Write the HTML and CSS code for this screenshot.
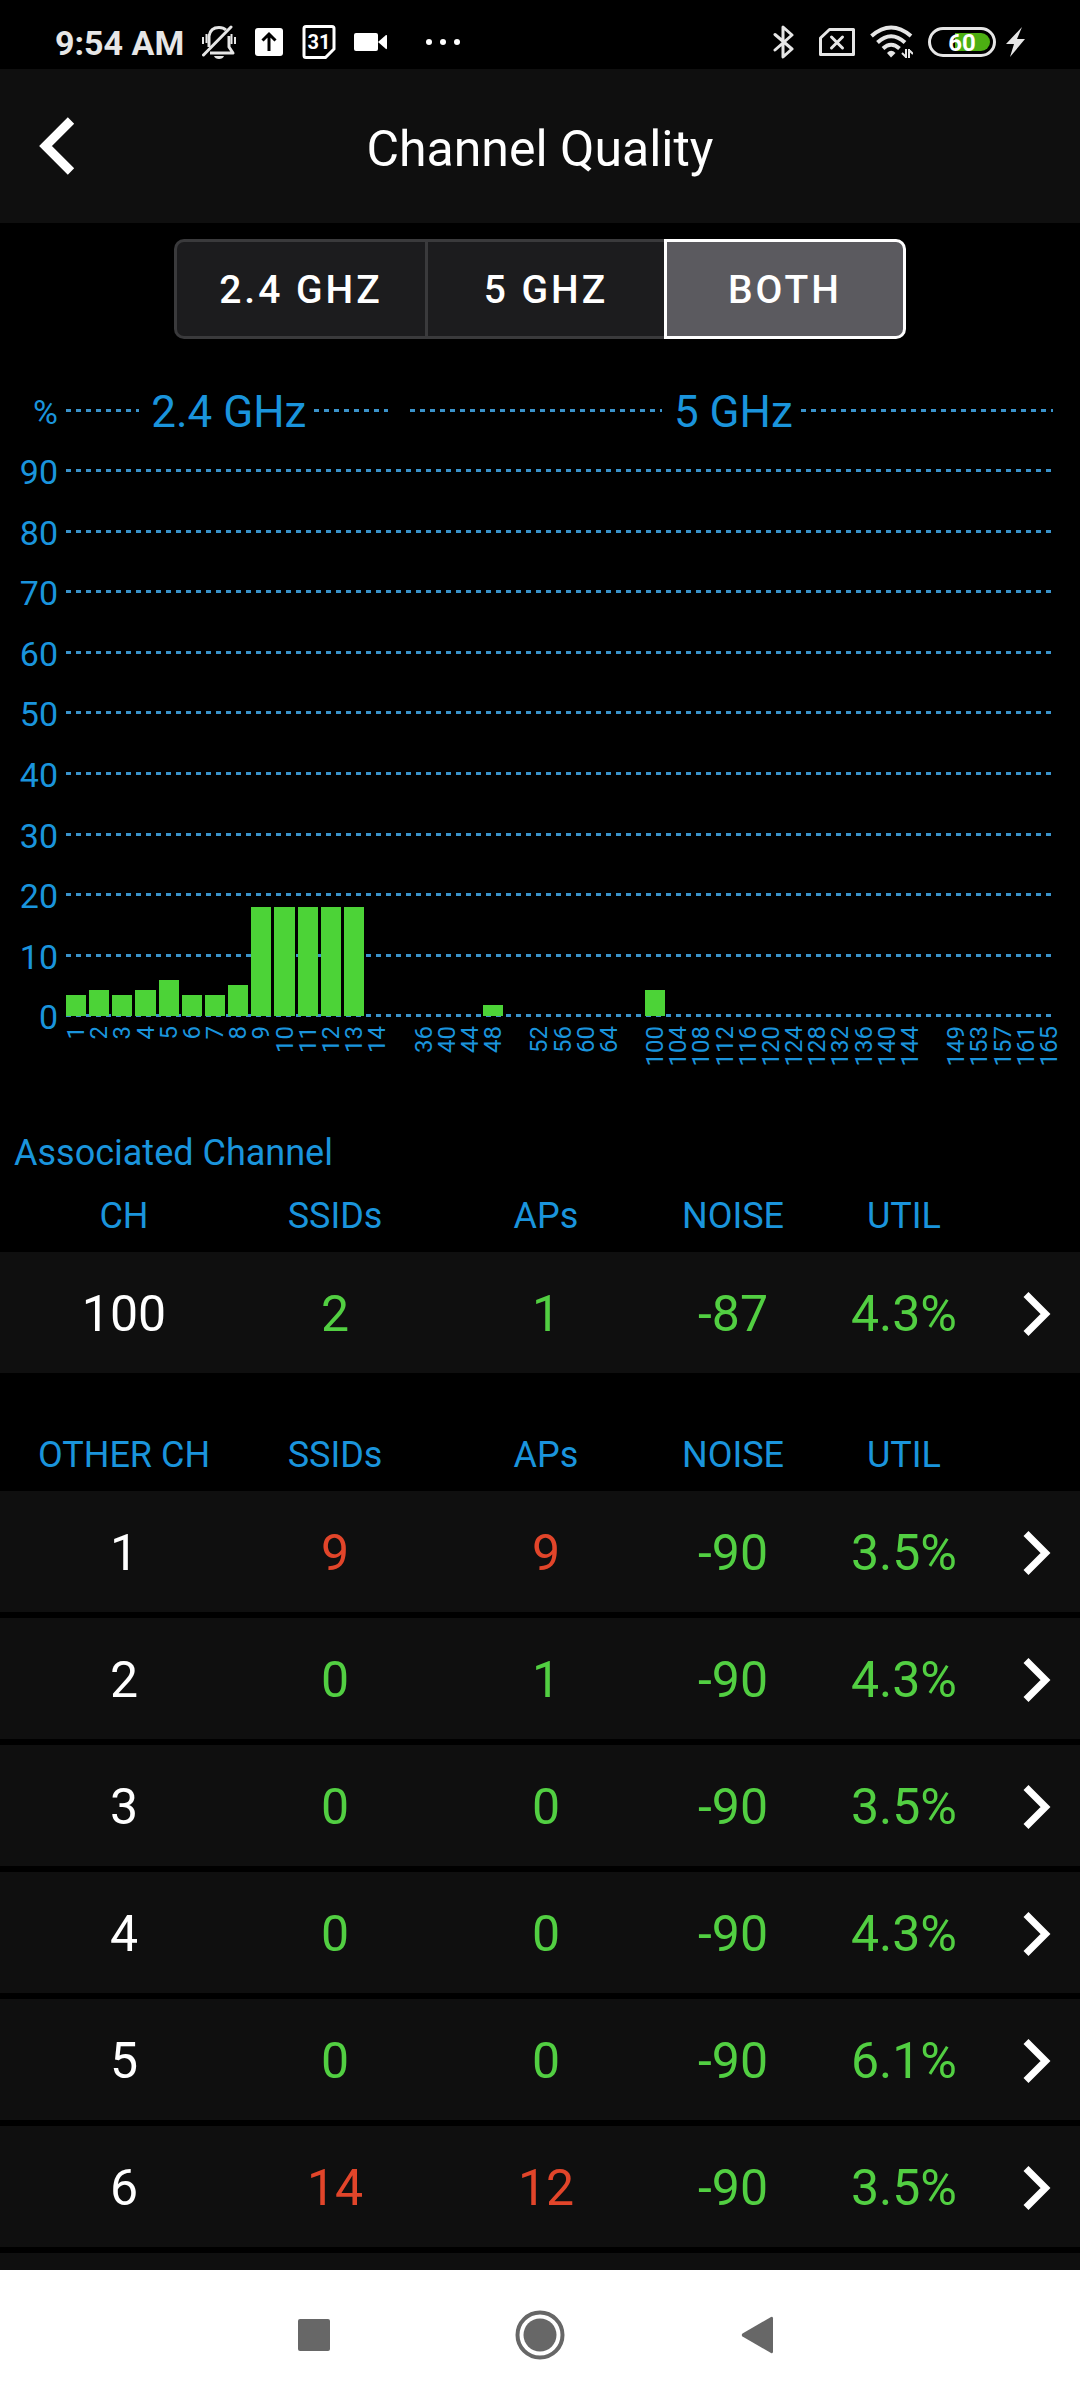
FILE: index.html
```html
<!DOCTYPE html>
<html lang="en">
<head>
<meta charset="utf-8">
<meta name="viewport" content="width=device-width, initial-scale=1">
<title>Channel Quality</title>
<link rel="stylesheet" href="styles.css">
</head>
<body>
<div class="app">
  <div class="status">
    <div class="status-side">
      <span class="time">9:54 AM</span>
      <svg width="34" height="34" viewBox="0 0 34 34" fill="none" stroke="#e6e6e6" stroke-width="3">
        <path d="M7 22V11C8 5 12 2.500 17 2.500C20 2.500 22.500 3.500 24 5M27 11V22L31 28H8" stroke-linejoin="round"/>
        <path d="M1.500 30L29 2" stroke-linecap="round"/>
        <path d="M1 12v7M4.500 9v9M33 12v7M29.500 9v10" stroke-width="2"/>
        <path d="M12 31h10c-1 4-9 4-10 0z" fill="#e6e6e6" stroke="none"/>
      </svg>
      <svg width="30" height="28" viewBox="0 0 30 28"><rect x="1" width="28" height="28" rx="3" fill="#fff"/><path d="M15 23V6M8.500 12.500L15 6l6.500 6.500" fill="none" stroke="#000" stroke-width="3"/></svg>
      <svg width="34" height="34" viewBox="0 0 34 34"><path d="M4 1.500H30Q32 1.500 32 3.500V24L23.500 32.500H4Q2 32.500 2 30.500V3.500Q2 1.500 4 1.500Z" fill="none" stroke="#fff" stroke-width="3"/><text x="17" y="23.500" class="cal-day">31</text></svg>
      <svg width="33" height="20" viewBox="0 0 33 20" fill="#fff"><rect y="1" width="24" height="18" rx="2"/><path d="M24 10L32 3Q33 2.500 33 4V16Q33 17.500 32 17z"/></svg>
      <svg class="more" width="36" height="8" viewBox="0 0 36 8" fill="#fff"><circle cx="4" cy="4" r="3"/><circle cx="18" cy="4" r="3"/><circle cx="32" cy="4" r="3"/></svg>
    </div>
    <div class="status-side status-right">
      <svg width="32" height="34" viewBox="0 0 32 34" fill="none" stroke="#e6e6e6" stroke-width="3" stroke-linejoin="round" stroke-linecap="round"><path d="M3 9.500L20 24L11 32V2L20 10L3 25"/></svg>
      <svg width="36" height="28" viewBox="0 0 36 28" fill="none" stroke="#e6e6e6" stroke-width="3"><path d="M10.500 1.500H34.500V26.500H1.500V10Z" stroke-linejoin="round"/><path d="M12.500 9L23.500 20M23.500 9L12.500 20" stroke-linecap="round"/></svg>
      <svg width="43" height="34" viewBox="0 0 43 34" fill="none" stroke="#e6e6e6" stroke-width="4"><path d="M1.500 11Q21 -6 41 11M7.500 17.500Q21 5 35 17.500M13 23.500Q21 16 29.500 23.500"/><path d="M17 28Q21 23.500 25.500 28L21 32.500Z" fill="#e6e6e6" stroke="none"/><path d="M36 24v9M39 33v-9M36 32l-4-4M39 25l4 4" stroke-width="2"/></svg>
      <span class="power">
        <svg width="68" height="30" viewBox="0 0 68 30"><rect x="1.500" y="1.500" width="65" height="27" rx="13.500" fill="none" stroke="#e6e6e6" stroke-width="3"/><path d="M27 6H53A9 9 0 0 1 53 24H27Z" fill="#4caf12"/><text x="34" y="23.500" class="charge">60</text></svg>
        <svg width="19" height="30" viewBox="0 0 19 30"><path d="M16 0L0 17H8L4 30L19 12H11Z" fill="#e6e6e6"/></svg>
      </span>
    </div>
  </div>

  <header class="header">
    <button class="back" aria-label="Back"><svg width="36" height="58" viewBox="0 0 36 58"><path d="M32 3.500L6.500 29L32 54.500" fill="none" stroke="#fff" stroke-width="9"/></svg></button>
    <h1>Channel Quality</h1>
  </header>

  <main class="content">
    <div class="segments">
      <button>2.4 GHZ</button><button>5 GHZ</button><button class="selected" aria-pressed="true">BOTH</button>
    </div>

    <div class="chart">
      <div class="scale">
        <div class="tick"><span>%</span>
          <div class="bands">
            <div class="band band-low"><i class="line"></i><b>2.4 GHz</b><i class="line"></i></div>
            <div class="band band-high"><i class="line"></i><b>5 GHz</b><i class="line"></i></div>
          </div>
        </div>
        <div class="tick"><span>90</span><i class="line"></i></div>
        <div class="tick"><span>80</span><i class="line"></i></div>
        <div class="tick"><span>70</span><i class="line"></i></div>
        <div class="tick"><span>60</span><i class="line"></i></div>
        <div class="tick"><span>50</span><i class="line"></i></div>
        <div class="tick"><span>40</span><i class="line"></i></div>
        <div class="tick"><span>30</span><i class="line"></i></div>
        <div class="tick"><span>20</span><i class="line"></i></div>
        <div class="tick"><span>10</span><i class="line"></i></div>
        <div class="tick"><span>0</span><i class="line"></i></div>
      </div>
      <div class="bars" id="bars"></div>
    </div>

    <h2>Associated Channel</h2>
    <table>
      <colgroup><col class="c-ch"><col class="c-ssid"><col class="c-ap"><col class="c-noise"><col class="c-util"><col class="c-more"></colgroup>
      <thead><tr><th>CH</th><th>SSIDs</th><th>APs</th><th>NOISE</th><th>UTIL</th><th></th></tr></thead>
      <tbody>
        <tr><td>100</td><td class="good">2</td><td class="good">1</td><td class="good">-87</td><td class="good">4.3%</td><td><a href="#100" aria-label="Channel 100"><svg width="28" height="44" viewBox="0 0 28 44"><path d="M3 2.500L22.500 22L3 41.500"/></svg></a></td></tr>
      </tbody>
    </table>

    <table class="others">
      <colgroup><col class="c-ch"><col class="c-ssid"><col class="c-ap"><col class="c-noise"><col class="c-util"><col class="c-more"></colgroup>
      <thead><tr><th>OTHER CH</th><th>SSIDs</th><th>APs</th><th>NOISE</th><th>UTIL</th><th></th></tr></thead>
      <tbody>
        <tr><td>1</td><td class="bad">9</td><td class="bad">9</td><td class="good">-90</td><td class="good">3.5%</td><td><a href="#1" aria-label="Channel 1"><svg width="28" height="44" viewBox="0 0 28 44"><path d="M3 2.500L22.500 22L3 41.500"/></svg></a></td></tr>
        <tr><td>2</td><td class="good">0</td><td class="good">1</td><td class="good">-90</td><td class="good">4.3%</td><td><a href="#2" aria-label="Channel 2"><svg width="28" height="44" viewBox="0 0 28 44"><path d="M3 2.500L22.500 22L3 41.500"/></svg></a></td></tr>
        <tr><td>3</td><td class="good">0</td><td class="good">0</td><td class="good">-90</td><td class="good">3.5%</td><td><a href="#3" aria-label="Channel 3"><svg width="28" height="44" viewBox="0 0 28 44"><path d="M3 2.500L22.500 22L3 41.500"/></svg></a></td></tr>
        <tr><td>4</td><td class="good">0</td><td class="good">0</td><td class="good">-90</td><td class="good">4.3%</td><td><a href="#4" aria-label="Channel 4"><svg width="28" height="44" viewBox="0 0 28 44"><path d="M3 2.500L22.500 22L3 41.500"/></svg></a></td></tr>
        <tr><td>5</td><td class="good">0</td><td class="good">0</td><td class="good">-90</td><td class="good">6.1%</td><td><a href="#5" aria-label="Channel 5"><svg width="28" height="44" viewBox="0 0 28 44"><path d="M3 2.500L22.500 22L3 41.500"/></svg></a></td></tr>
        <tr><td>6</td><td class="bad">14</td><td class="bad">12</td><td class="good">-90</td><td class="good">3.5%</td><td><a href="#6" aria-label="Channel 6"><svg width="28" height="44" viewBox="0 0 28 44"><path d="M3 2.500L22.500 22L3 41.500"/></svg></a></td></tr>
        <tr><td colspan="6"></td></tr>
      </tbody>
    </table>
  </main>

  <nav class="navbar">
    <button aria-label="Recent apps"><svg width="50" height="50" viewBox="0 0 50 50"><rect x="8" y="9" width="32" height="32" rx="2"/></svg></button>
    <button aria-label="Home"><svg width="50" height="50" viewBox="0 0 50 50"><circle cx="25" cy="25" r="16.500"/><circle cx="25" cy="25" r="22.500" fill="none" stroke="#676767" stroke-width="4"/></svg></button>
    <button aria-label="Back"><svg width="50" height="50" viewBox="0 0 50 50"><path d="M2.500 23.500L31 7Q33 6 33 8.500V41.500Q33 44 31 43L2.500 26.500Q1 25 2.500 23.500Z"/></svg></button>
  </nav>
</div>
<script src="chart.js"></script>
</body>
</html>
```
FILE: chart.js
```js
// Channels in display order; null leaves an empty slot between groups.
const channels = [
  1, 2, 3, 4, 5, 6, 7, 8, 9, 10, 11, 12, 13, 14, null,
  36, 40, 44, 48, null, 52, 56, 60, 64, null,
  100, 104, 108, 112, 116, 120, 124, 128, 132, 136, 140, 144, null,
  149, 153, 157, 161, 165
];
const utilisation = {
  1: 3.5, 2: 4.3, 3: 3.5, 4: 4.3, 5: 6, 6: 3.5, 7: 3.5, 8: 5.2,
  9: 18, 10: 18, 11: 18, 12: 18, 13: 18, 48: 1.8, 100: 4.3
};
const bars = document.getElementById('bars');
for (const channel of channels) {
  const slot = document.createElement('div');
  slot.className = 'slot';
  const track = document.createElement('div');
  track.className = 'track';
  if (utilisation[channel]) {
    const bar = document.createElement('div');
    bar.className = 'bar';
    bar.style.height = utilisation[channel] + '%';
    track.append(bar);
  }
  slot.append(track);
  if (channel !== null) {
    const label = document.createElement('span');
    label.className = 'channel';
    label.textContent = channel;
    slot.append(label);
  }
  bars.append(slot);
}
```
FILE: styles.css
```css
* { box-sizing: border-box; }

body {
  margin: 0;
  background: #000;
  color: #fff;
  font-family: Roboto, "Liberation Sans", sans-serif;
}

button {
  border: 0;
  padding: 0;
  background: none;
  color: inherit;
  font: inherit;
}

svg { display: block; flex: none; }

.app {
  display: flex;
  flex-direction: column;
  height: 100vh;
}

/* status bar */
.status {
  display: flex;
  flex: none;
  justify-content: space-between;
  height: 69px;
  padding: 15px 55px 0 55px;
}
.status-side { display: flex; align-items: center; gap: 18px; }
.status-right { gap: 15px; }
.time { padding-top: 2px; color: #e6e6e6; font-size: 34px; font-weight: 700; line-height: 40px; }
.more { margin-left: 20px; }
.power { display: flex; gap: 10px; }
.cal-day { fill: #fff; font-size: 20px; font-weight: 700; text-anchor: middle; }
.charge { fill: #fff; font-size: 24px; font-weight: 700; text-anchor: middle; }

/* title bar */
.header {
  display: grid;
  flex: none;
  grid-template-columns: 75px 1fr 75px;
  align-items: center;
  height: 154px;
  background: #0f0f0f;
}
.back { justify-self: end; }
h1 {
  margin: 0;
  padding-top: 6px;
  font-size: 50px;
  font-weight: 400;
  line-height: 60px;
  text-align: center;
}

.content { flex: 1; min-height: 0; overflow: hidden; }

/* band switch */
.segments {
  display: flex;
  justify-content: center;
  margin: 16px 0 41px;
}
.segments button {
  width: 239px;
  height: 100px;
  padding-top: 2px;
  border: 3px solid #3a3a3c;
  border-right-width: 0;
  background: #1c1c1e;
  font-size: 39px;
  font-weight: 500;
  letter-spacing: 3px;
}
.segments button:first-child { width: 251px; border-radius: 10px 0 0 10px; }
.segments .selected {
  width: 242px;
  border-color: #fff;
  border-right-width: 3px;
  border-radius: 0 10px 10px 0;
  background: #5b5a5f;
}

/* chart */
.chart { display: grid; color: #1a94dc; }
.scale, .bars { grid-area: 1 / 1; }
.scale {
  display: grid;
  grid-auto-rows: 1fr;
  align-self: start;
  height: 666px;
  padding-right: 27px;
}
.tick {
  display: grid;
  grid-template-columns: 58px 1fr;
  column-gap: 8px;
  align-items: center;
  min-height: 0;
  font-size: 34px;
  line-height: 40px;
  text-align: right;
}
.tick span { padding-top: 3px; }
.line {
  flex: 1;
  height: 3px;
  background: repeating-linear-gradient(90deg, #3a93cb 0 5px, transparent 5px 10px);
}
.bands { display: flex; gap: 22px; }
.band { display: flex; align-items: center; }
.band b { padding: 3px 8px 0 12px; font-size: 44px; font-weight: 400; }
.band-low { flex: 1; }
.band-high { flex: 2; }

.bars {
  display: grid;
  grid-template-columns: repeat(43, 1fr);
  column-gap: 3px;
  padding: 30px 21px 0 66px;
}
.slot {
  display: flex;
  flex-direction: column;
  align-items: center;
  min-width: 0;
  height: 659px;
}
.track {
  display: flex;
  flex: none;
  align-items: flex-end;
  width: 100%;
  height: 606px;
}
.bar { width: 100%; background: #4cd337; }
.channel {
  margin-top: 10px;
  font-size: 24px;
  line-height: 22px;
  writing-mode: vertical-rl;
  transform: rotate(180deg);
}

/* tables */
h2 {
  margin: 63px 14px 4px;
  color: #1a94dc;
  font-size: 36px;
  font-weight: 400;
  line-height: 42px;
}
table { width: 100%; table-layout: fixed; border-spacing: 0; }
.others { margin-top: 38px; }
.c-ch { width: 248px; }
.c-ssid { width: 174px; }
.c-ap { width: 248px; }
.c-noise { width: 126px; }
.c-util { width: 216px; }
.c-more { width: 68px; }
th {
  height: 74px;
  padding: 2px 0 0;
  color: #1a94dc;
  font-size: 36px;
  font-weight: 400;
}
td {
  height: 127px;
  padding: 3px 0 0;
  border-bottom: 6px solid #000;
  background: #0f0f0f;
  font-size: 50px;
  text-align: center;
}
td a { display: block; padding-left: 11px; }
td path { fill: none; stroke: #fff; stroke-width: 7; }
.good { color: #52cf42; }
.bad { color: #e2452a; }

/* system navigation */
.navbar {
  display: flex;
  flex: none;
  justify-content: center;
  gap: 175px;
  height: 130px;
  background: #fff;
  align-items: center;
}
.navbar svg { fill: #676767; }
```
